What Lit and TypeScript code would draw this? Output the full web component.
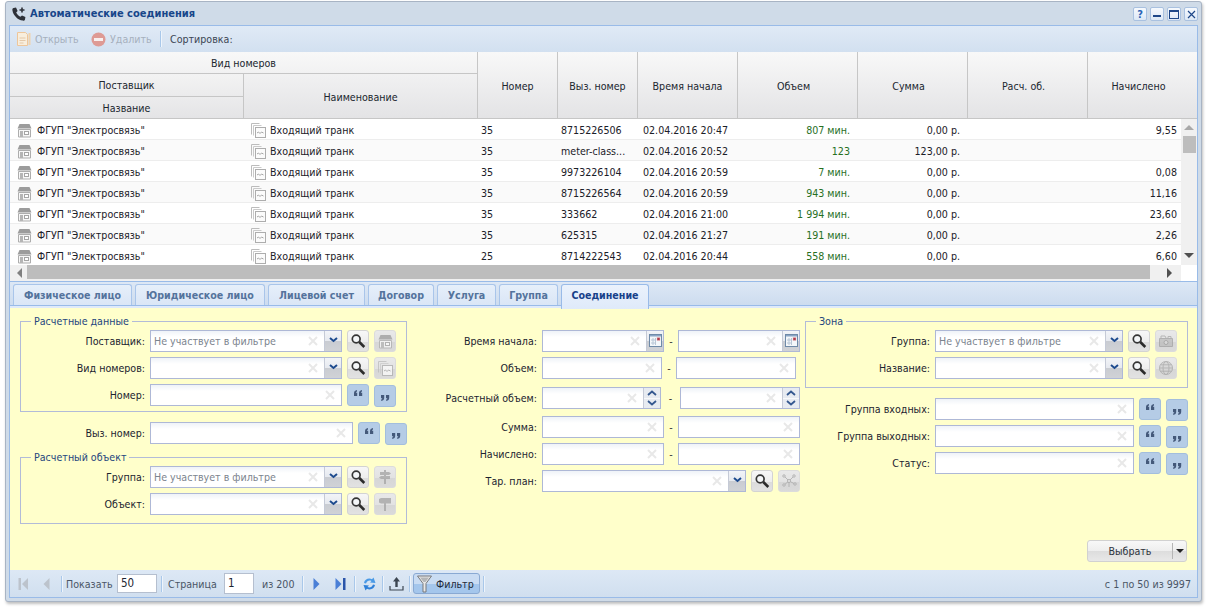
import { LitElement, html, css } from "lit";
import { customElement } from "lit/decorators.js";

const I = {
  phone: html`<svg width="16" height="16" viewBox="0 0 16 16"><path d="M2.600 2 5 1.600 6.600 5 5.200 6.600C6 8.400 7.600 10 9.400 10.800L11 9.400 14.400 11 14 13.400C13.800 14.400 12.800 14.800 11.800 14.600 6.600 13.800 2.200 9.400 1.400 4.200 1.200 3.200 1.600 2.200 2.600 2Z" fill="#2e3138"/><path d="M11 1.500v5M8.500 4h5" stroke="#2e3138" stroke-width="1.600"/></svg>`,
  open: html`<svg width="15" height="16" viewBox="0 0 15 16"><path d="M1.500 1.500h8l2 2v11h-10z" fill="#f8eedd" stroke="#eec69a"/><path d="M3.500 7h6M3.500 9.500h6M3.500 12h4" stroke="#e4c8a8"/><path d="M13.500 2v12" stroke="#f0d3ad" stroke-width="2"/></svg>`,
  del: html`<svg width="15" height="15" viewBox="0 0 15 15"><circle cx="7.500" cy="7.500" r="7" fill="#de9a94"/><rect x="3" y="6" width="9" height="3" fill="#f8efee"/></svg>`,
  shop: html`<svg width="15" height="15" viewBox="0 0 15 15"><path d="M2.500 1h10l2 4.500h-14z" fill="#9c9c9c"/><path d="M1.500 6.500h12v7.500h-12z" fill="#f7f7f7" stroke="#adadad"/><rect x="3" y="8" width="3" height="6" fill="#b5b5b5"/><rect x="7.500" y="8.500" width="4" height="3" fill="#fff" stroke="#a5a5a5"/></svg>`,
  docs: html`<svg width="16" height="16" viewBox="0 0 16 16"><path d="M1.500 12.500v-11h8" fill="none" stroke="#bcbcbc"/><path d="M3.500 13.500v-10h8" fill="none" stroke="#cacaca"/><rect x="5.500" y="5.500" width="10" height="10" fill="#fbfbfb" stroke="#adadad"/><path d="M7 11l1.500-1 1.500 1.500 1.500-1.500 2 1" fill="none" stroke="#a5a5a5"/></svg>`,
  search: html`<svg width="16" height="16" viewBox="0 0 16 16"><circle cx="6.200" cy="6" r="3.900" fill="#f4f6f8" stroke="#353535" stroke-width="1.700"/><path d="M9.300 9l5 5" stroke="#2c2c2c" stroke-width="2.600"/></svg>`,
  qo: html`<svg width="10" height="8" viewBox="0 0 10 8"><path d="M1 7V4.200C1 2.400 2 1.400 4 1v1.500C3.200 2.800 3 3.200 3 3.800h1.200V7zM6 7V4.200C6 2.400 7 1.400 9 1v1.500C8.200 2.800 8 3.200 8 3.800h1.200V7z" fill="#44597a"/></svg>`,
  qc: html`<svg width="10" height="8" viewBox="0 0 10 8"><path d="M4.200 1v2.800C4.200 5.600 3.200 6.600 1.200 7V5.500C2 5.200 2.200 4.800 2.200 4.200H1V1zM9.200 1v2.800C9.200 5.600 8.200 6.600 6.200 7V5.500C7 5.200 7.200 4.800 7.200 4.200H6V1z" fill="#44597a"/></svg>`,
  post2: html`<svg width="16" height="16" viewBox="0 0 16 16"><path d="M7 1h2v14H7z" fill="#a3a3a3"/><path d="M3 3h9l2 1.500-2 1.500H3zM13 7H4L2 8.500 4 10h9z" fill="#a3a3a3"/></svg>`,
  post1: html`<svg width="16" height="16" viewBox="0 0 16 16"><path d="M7 7h2v8H7z" fill="#a3a3a3"/><path d="M2 3l2-1h10v5.500H4l-2-1z" fill="#a3a3a3"/></svg>`,
  folder: html`<svg width="16" height="16" viewBox="0 0 16 16"><path d="M1.500 5.500h13v8h-13z" fill="#bdbdbd" stroke="#a0a0a0"/><path d="M3 5V3h4l1 2M10 5V3.500h3V5" fill="none" stroke="#a8a8a8"/><circle cx="8" cy="9.500" r="2" fill="#d9d9d9" stroke="#999"/></svg>`,
  globe: html`<svg width="16" height="16" viewBox="0 0 16 16"><circle cx="8" cy="8" r="6.500" fill="#d6d6d6" stroke="#a5a5a5"/><ellipse cx="8" cy="8" rx="3" ry="6.500" fill="none" stroke="#a5a5a5"/><path d="M1.500 8h13M2.500 4.800h11M2.500 11.200h11" stroke="#a5a5a5"/></svg>`,
  net: html`<svg width="16" height="16" viewBox="0 0 16 16"><path d="M8 8 3 3M8 8l5-5M8 8l-5 4M8 8l6 3M8 8l0 6" stroke="#a8a8a8"/><g fill="#efefef" stroke="#a0a0a0"><circle cx="8" cy="8" r="1.500"/><circle cx="3" cy="3" r="1.200"/><circle cx="13" cy="3" r="1.200"/><circle cx="3" cy="12" r="1.200"/><circle cx="14" cy="11" r="1.200"/></g></svg>`,
  cal: html`<svg width="13" height="14" viewBox="0 0 13 14"><rect x=".5" y="1.500" width="12" height="12" fill="#f4f7fa" stroke="#6f8aa8"/><rect x="1" y="2" width="11" height="1.500" fill="#8aa5c4"/><path d="M2 7h5M2 10h5M4 5v7M6.500 5v7" stroke="#b8c6d6"/><rect x="8" y="4.500" width="3" height="3" fill="#b03a4a" stroke="#e8c4c8" stroke-width=".5"/></svg>`,
  clear: html`<svg class="x" width="10" height="10" viewBox="0 0 10 10"><path d="M1 1l8 8M9 1l-8 8" stroke="#e8e8e8" stroke-width="2"/></svg>`,
  chev: html`<svg width="9" height="6" viewBox="0 0 9 6"><path d="M1 1l3.500 3L8 1" fill="none" stroke="#1d4a8e" stroke-width="2"/></svg>`,
  up: html`<svg width="10" height="6" viewBox="0 0 10 6"><path d="M1 5l4-3.500L9 5" fill="none" stroke="#34588f" stroke-width="1.800"/></svg>`,
  dn: html`<svg width="10" height="6" viewBox="0 0 10 6"><path d="M1 1l4 3.500L9 1" fill="none" stroke="#34588f" stroke-width="1.800"/></svg>`,
  first: html`<svg width="11" height="12" viewBox="0 0 11 12"><path d="M.5 0h2.500v12H.5z" fill="#bcc3cc"/><path d="M10 0v12L4 6z" fill="#bcc3cc"/></svg>`,
  prev: html`<svg width="7" height="12" viewBox="0 0 7 12"><path d="M6.500 0v12L.5 6z" fill="#bcc3cc"/></svg>`,
  next: html`<svg width="7" height="12" viewBox="0 0 7 12"><path d="M.5 0v12l6-6z" fill="#4a7fd6"/></svg>`,
  last: html`<svg width="11" height="12" viewBox="0 0 11 12"><path d="M.5 0v12l6-6z" fill="#4a7fd6"/><path d="M8 0h2.500v12H8z" fill="#2a55aa"/></svg>`,
  refresh: html`<svg width="15" height="16" viewBox="0 0 15 16"><path d="M2 7C2.500 3.500 6.500 1.500 10 3.200L11.500 1.500 13.500 7 8 6.500 9.500 5C7 3.800 5 5 4 7.500z" fill="#4a9ae6"/><path d="M13 9C12.500 12.500 8.500 14.500 5 12.800L3.500 14.500 1.500 9 7 9.500 5.500 11C8 12.200 10 11 11 8.500z" fill="#2f80d8"/></svg>`,
  upload: html`<svg width="15" height="15" viewBox="0 0 15 15"><path d="M7.500 1 11 5.500H8.700V11H6.300V5.500H4z" fill="#3c4652"/><path d="M1 10v4h13v-4" fill="none" stroke="#3c4652" stroke-width="1.200"/></svg>`,
  filter: html`<svg width="15" height="18" viewBox="0 0 15 18"><path d="M.5 1h14L9 8.500V17H6V8.500z" fill="#e8e8e8" stroke="#77797c"/><path d="M3 2.500h9L8.500 7h-2z" fill="#b4b6b8"/></svg>`,
};

const ROWS = [
  ["35", "8715226506", "20:47", "807 мин.", "0,00 р.", "9,55"],
  ["35", "meter-class...", "20:52", "123", "123,00 р.", ""],
  ["35", "9973226104", "20:59", "7 мин.", "0,00 р.", "0,08"],
  ["35", "8715226564", "20:59", "943 мин.", "0,00 р.", "11,16"],
  ["35", "333662", "21:00", "1 994 мин.", "0,00 р.", "23,60"],
  ["35", "625315", "21:27", "191 мин.", "0,00 р.", "2,26"],
  ["25", "8714222543", "20:44", "558 мин.", "0,00 р.", "6,60"],
];
const TABS: [string, number][] = [["Физическое лицо", 119], ["Юридическое лицо", 130], ["Лицевой счет", 97], ["Договор", 66], ["Услуга", 59], ["Группа", 59]];
const PH = "Не участвует в фильтре";

@customElement("app-root")
export class AppRoot extends LitElement {
  static styles = css`
    :host { display: block; width: 1208px; height: 607px; background: #fff; font: 10.600px "DejaVu Sans Condensed", Tahoma, "Noto Sans", sans-serif; color: #1c2430; overflow: hidden; }
    .win { box-sizing: border-box; width: 1197px; height: 601px; margin: 1px 0 0 5px; border: 1px solid #a8b4c4; border-radius: 3px; background: #cfdbe8; padding: 0 3px 3px 3px; display: flex; flex-direction: column; box-shadow: 1px 2px 3px rgba(0,0,0,.25); }
    .title { height: 23px; display: flex; align-items: center; padding-left: 2px; flex: none; }
    .title > b { color: #17468a; margin-left: 3px; font-size: 11px; }
    .tools { margin-left: auto; display: flex; gap: 3px; margin-top: 1px; }
    .tb { width: 14px; height: 14px; box-sizing: border-box; border: 1px solid #a9c1e0; border-radius: 2px; background: linear-gradient(#f6f9fd, #dce8f6); display: flex; align-items: center; justify-content: center; }
    .tb b { color: #2a63b5; font-size: 11px; }
    .panel { flex: 1; border: 1px solid #99bbe8; display: flex; flex-direction: column; min-height: 0; background: #fff; }
    .top { height: 26px; flex: none; box-sizing: border-box; display: flex; align-items: center; background: linear-gradient(#e0eaf6, #d2e0f0); padding-left: 6px; }
    .dim { display: flex; align-items: center; gap: 4px; color: #a6b0bd; }
    .dim.o { width: 75px; }
    .dim.d { width: 69px; }
    .sep { width: 1px; height: 16px; background: #a9c8ea; box-shadow: 1px 0 0 #eef4fb; flex: none; }
    .sort { margin-left: 9px; color: #3c4654; }
    .grid { height: 229px; flex: none; display: grid; grid-template-columns: 1171px 16px; grid-template-rows: 67px 146px 16px; border-bottom: 1px solid #99bbe8; background: #fff; box-sizing: content-box; }
    .head { grid-column: 1 / 3; display: grid; grid-template-columns: 234px 234px 80px 80px 100px 120px 110px 120px 109px; grid-template-rows: 22px 23px 22px; background: linear-gradient(#f8f8f8, #e3e3e5); }
    .hc { display: flex; align-items: center; justify-content: center; box-sizing: border-box; padding-top: 2px; border-right: 1px solid #c6c6c6; border-bottom: 1px solid #c6c6c6; color: #20262e; }
    .hc.t { grid-column: 1 / 3; padding-top: 0; }
    .hc.r { grid-row: 2 / 4; grid-column: 2; }
    .hc.a { grid-row: 1 / 4; }
    .hc.a.p { padding-right: 8px; }
    .hc.n { border-right: none; }
    .hc.k3 { grid-column: 3; } .hc.k4 { grid-column: 4; } .hc.k5 { grid-column: 5; } .hc.k6 { grid-column: 6; } .hc.k7 { grid-column: 7; } .hc.k8 { grid-column: 8; } .hc.k9 { grid-column: 9; }
    .hc.g1 { grid-column: 1; padding-top: 0; background: linear-gradient(#f3f3f3, #ebebec); }
    .hc.g2 { grid-column: 1; padding-top: 0; background: linear-gradient(#ececed, #e4e4e6); }
    .rows { overflow: hidden; }
    .row { display: grid; grid-template-columns: 234px 234px 80px 80px 100px 120px 110px 120px 93px; height: 21px; box-sizing: border-box; padding-top: 2px; border-bottom: 1px solid #ededed; align-items: center; color: #1b2028; }
    .row.alt { background: #fafafa; }
    .c { display: flex; align-items: center; white-space: nowrap; overflow: hidden; }
    .c.i1 { padding-left: 7px; gap: 5px; }
    .c.i2 { padding-left: 6px; gap: 4px; }
    .c.l { padding-left: 3px; }
    .c.l.m { padding-left: 5px; }
    .c.num { justify-content: flex-end; padding-right: 8px; }
    .c.num.g { color: #27701f; }
    .c.num.e { padding-right: 4px; }
    .vs { background: #f0f0f0; display: flex; flex-direction: column; align-items: center; }
    .tri-u { margin-top: 6px; width: 0; height: 0; border: 5px solid transparent; border-top: 0; border-bottom: 5px solid #a8a8a8; }
    .thumbv { width: 13px; height: 17px; background: #bdbdbd; margin-top: 6px; margin-left: 1px; }
    .tri-d { margin-top: auto; margin-bottom: 7px; width: 0; height: 0; border: 5px solid transparent; border-bottom: 0; border-top: 5px solid #505050; }
    .hs { background: #f0f0f0; display: flex; align-items: flex-start; }
    .tri-l { margin: 3px 5px 0 7px; width: 0; height: 0; border: 5px solid transparent; border-left: 0; border-right: 5px solid #808080; }
    .thumbh { width: 1123px; height: 14px; background: #bdbdbd; }
    .tri-r { margin: 3px 0 0 17px; width: 0; height: 0; border: 5px solid transparent; border-right: 0; border-left: 5px solid #505050; }
    .tabs { height: 23px; flex: none; box-sizing: border-box; padding: 2px 0 0 3px; display: flex; gap: 3px; background: linear-gradient(#dde8f5, #cddcef); align-items: stretch; }
    .tab { box-sizing: border-box; border: 1px solid #a9c5ea; border-bottom: 0; border-radius: 3px 3px 0 0; background: linear-gradient(#e6effa, #dae6f6); font-weight: bold; color: #54739c; display: flex; align-items: center; justify-content: center; }
    .tab.on { width: 88px; color: #17418a; background: linear-gradient(#eaf2fc, #dfeafa); border-color: #99bbe8; margin-bottom: -3px; position: relative; z-index: 1; height: 25px; padding-bottom: 4px; }
    .tabline { height: 1px; background: #99bbe8; flex: none; }
    .tabgap { height: 2px; background: #dfeafa; flex: none; }
    .form { height: 262px; flex: none; box-sizing: border-box; background: #ffffcb; padding: 13px 10px 8px 10px; display: flex; flex-direction: column; }
    .cols { display: flex; flex: 1; }
    .col1 { width: 387px; }
    .col2 { width: 380px; margin-left: 13px; padding-top: 9px; box-sizing: border-box; }
    .col3 { width: 383px; margin-left: 5px; }
    .box { position: relative; border: 1px solid #b2bbd8; padding-top: 8px; padding-bottom: 5px; }
    .box.b8 { padding-bottom: 8px; }
    .box .fr { margin-left: -1px; }
    .leg { position: absolute; top: -7px; left: 10px; padding: 0 3px; background: #ffffcb; color: #25467e; line-height: 13px; }
    .fr { display: flex; align-items: flex-start; height: 22px; }
    .fr + .fr { margin-top: 5px; }
    .mt10 { margin-top: 10px; }
    .mt13 { margin-top: 13px; }
    .fr.mt8 { margin-top: 8px; }
    .fr.mt7 { margin-top: 7px; }
    .fr.mt10 { margin-top: 10px; }
    .lab { text-align: right; box-sizing: border-box; padding-right: 5px; line-height: 22px; flex: none; white-space: nowrap; color: #1c2330; }
    .l122 { width: 122px; }
    .l130 { width: 130px; }
    .inp { box-sizing: border-box; height: 22px; border: 1px solid #aeb8d6; background: linear-gradient(#eff3f8, #fff 6px); display: flex; align-items: center; flex: none; overflow: hidden; }
    .inp .tx { flex: 1; padding-left: 3px; color: #7c848e; white-space: nowrap; overflow: hidden; }
    .x { flex: none; margin-right: 6px; }
    .trg { width: 17px; height: 20px; flex: none; border-left: 1px solid #c5cad6; background: linear-gradient(#f2f4f8 0, #e6e9ef 50%, #c9ccd2 51%, #d0d2d6 100%); display: flex; align-items: center; justify-content: center; padding-bottom: 2px; box-sizing: border-box; }
    .spin { width: 17px; height: 20px; flex: none; border-left: 1px solid #c5cad6; display: flex; flex-direction: column; box-sizing: border-box; background: #e7ebf1; }
    .spin span { flex: 1; display: flex; align-items: center; justify-content: center; }
    .spin span + span { border-top: 1px solid #f8f9fb; }
    .btn { box-sizing: border-box; width: 22px; height: 22px; flex: none; margin-left: 5px; border: 1px solid #d3d3d3; border-radius: 3px; background: linear-gradient(#f7f7f7 0, #ededed 55%, #dcdcdc 56%, #e2e2e2 100%); display: flex; align-items: center; justify-content: center; }
    .btn.off { background: linear-gradient(#e9e9e9 0, #e2e2e2 55%, #d6d6d6 56%, #dadada 100%); border-color: #dcdcdc; }
    .btn.off svg { opacity: .75; }
    .btn.q { background: #b5cce6; border-color: #a3bedd; padding-bottom: 4px; }
    .btn.q.low { margin-top: 1px; padding: 4px 0 0; }
    .dash { flex: none; text-align: center; line-height: 22px; color: #333; }
    .d14 { width: 14px; }
    .d18 { width: 19px; }
    .foot { display: flex; justify-content: flex-end; }
    .sel { width: 100px; height: 22px; box-sizing: border-box; border: 1px solid #d1d1d1; border-radius: 3px; background: linear-gradient(#f8f8f8 0, #eeeeee 50%, #dddddd 52%, #e8e8e8 100%); display: flex; align-items: center; }
    .sel span { width: 84px; text-align: center; color: #2c333d; }
    .sel i { width: 1px; height: 16px; background: #b5b5b5; }
    .sel em { flex: 1; display: flex; justify-content: center; }
    .arr { width: 0; height: 0; border: 4px solid transparent; border-bottom: 0; border-top: 4px solid #222; }
    .bot { height: 27px; flex: none; display: flex; align-items: center; background: linear-gradient(#dde8f5, #d0dfef); color: #4a5666; box-sizing: border-box; padding-left: 8px; }
    .pi { box-sizing: border-box; height: 19px; border: 1px solid #b5bfcf; background: #fff; color: #1c2430; font-size: 11.500px; line-height: 17px; padding-left: 3px; flex: none; }
    .w40 { width: 40px; margin-left: 5px; }
    .w30 { width: 30px; margin-left: 8px; height: 21px; line-height: 19px; }
    .ml { display: flex; align-items: center; }
    .pk { width: 46px; margin-left: 4px; flex: none; white-space: nowrap; }
    .st { width: 48px; margin-left: 6px; flex: none; white-space: nowrap; }
    .iz { width: 33px; margin-left: 8px; flex: none; white-space: nowrap; }
    .m14 { margin-left: 14px; } .m11 { margin-left: 11px; } .m10 { margin-left: 10px; } .m15 { margin-left: 15px; } .m8 { margin-left: 8px; } .m7 { margin-left: 7px; } .m6 { margin-left: 6px; } .m5 { margin-left: 5px; } .m4 { margin-left: 4px; } .m3 { margin-left: 3px; }
    .fb { width: 67px; height: 21px; box-sizing: border-box; margin-left: 3px; border: 1px solid #89a9d3; border-radius: 3px; background: linear-gradient(#c9dcf3 0, #c9dcf3 50%, #a4c6ec 52%, #a4c6ec 100%); display: flex; align-items: center; padding-left: 3px; gap: 4px; color: #1f2a3a; flex: none; }
    .cnt { margin-left: auto; padding-right: 6px; }
  `;

  inp(w: number, ph = "", kind = "") {
    return html`<div class="inp" style="width:${w}px"><span class="tx">${ph}</span>${I.clear}
      ${kind === "c" ? html`<span class="trg">${I.chev}</span>` : ""}
      ${kind === "d" ? html`<span class="trg">${I.cal}</span>` : ""}
      ${kind === "s" ? html`<span class="spin"><span>${I.up}</span><span>${I.dn}</span></span>` : ""}
    </div>`;
  }
  quotes() {
    return html`<span class="btn q">${I.qo}</span><span class="btn q low">${I.qc}</span>`;
  }
  combo(label: string, lc: string, w: number, ph: string, icon: unknown) {
    return html`<div class="fr"><span class="lab ${lc}">${label}</span>${this.inp(w, ph, "c")}<span class="btn">${I.search}</span><span class="btn off">${icon}</span></div>`;
  }
  range(label: string, w1: number, k1: string, dc: string, w2: number) {
    return html`<div class="fr ${label === "Расчетный объем:" ? "mt8" : label === "Сумма:" ? "mt7" : ""}"><span class="lab l122">${label}</span>${this.inp(w1, "", k1)}<span class="dash ${dc}">-</span>${this.inp(w2, "", k1)}</div>`;
  }

  render() {
    return html`<div class="win">
      <div class="title">${I.phone}<b>Автоматические соединения</b>
        <div class="tools">
          <span class="tb"><b>?</b></span>
          <span class="tb"><svg width="8" height="8"><rect x="0" y="5" width="8" height="2" fill="#1e4788"/></svg></span>
          <span class="tb"><svg width="10" height="9"><rect x=".5" y="1" width="9" height="7.500" fill="none" stroke="#1e4788" stroke-width="1"/><rect x="0" y="0" width="10" height="2" fill="#1e4788"/></svg></span>
          <span class="tb"><svg width="9" height="9"><path d="M1 1l7 7M8 1l-7 7" stroke="#1e4788" stroke-width="1.200"/></svg></span>
        </div>
      </div>
      <div class="panel">
        <div class="top">
          <span class="dim o">${I.open}Открыть</span><span class="dim d">${I.del}Удалить</span><span class="sep"></span><span class="sort">Сортировка:</span>
        </div>
        <div class="grid">
          <div class="head">
            <div class="hc t">Вид номеров</div>
            <div class="hc a k3">Номер</div>
            <div class="hc a k4">Выз. номер</div>
            <div class="hc a k5">Время начала</div>
            <div class="hc a p k6">Объем</div>
            <div class="hc a p k7">Сумма</div>
            <div class="hc a p k8">Расч. об.</div>
            <div class="hc a p n k9">Начислено</div>
            <div class="hc g1">Поставщик</div>
            <div class="hc r">Наименование</div>
            <div class="hc g2">Название</div>
          </div>
          <div class="rows">
            ${ROWS.map((r, i) => html`<div class="row ${i % 2 ? "alt" : ""}">
              <div class="c i1">${I.shop}<span>ФГУП "Электросвязь"</span></div>
              <div class="c i2">${I.docs}<span>Входящий транк</span></div>
              <div class="c l">${r[0]}</div>
              <div class="c l">${r[1]}</div>
              <div class="c l m">02.04.2016 ${r[2]}</div>
              <div class="c num g">${r[3]}</div>
              <div class="c num">${r[4]}</div>
              <div class="c num"></div>
              <div class="c num e">${r[5]}</div>
            </div>`)}
          </div>
          <div class="vs"><span class="tri-u"></span><span class="thumbv"></span><span class="tri-d"></span></div>
          <div class="hs"><span class="tri-l"></span><span class="thumbh"></span><span class="tri-r"></span></div>
          <div></div>
        </div>
        <div class="tabs">
          ${TABS.map(([t, w]) => html`<div class="tab" style="width:${w}px">${t}</div>`)}
          <div class="tab on">Соединение</div>
        </div>
        <div class="tabline"></div>
        <div class="tabgap"></div>
        <div class="form">
          <div class="cols">
            <div class="col1">
              <div class="box"><span class="leg">Расчетные данные</span>
                ${this.combo("Поставщик:", "l130", 192, PH, I.shop)}
                ${this.combo("Вид номеров:", "l130", 192, "", I.docs)}
                <div class="fr"><span class="lab l130">Номер:</span>${this.inp(192)}${this.quotes()}</div>
              </div>
              <div class="fr mt10"><span class="lab l130">Выз. номер:</span>${this.inp(203)}${this.quotes()}</div>
              <div class="box b8 mt13"><span class="leg">Расчетный объект</span>
                ${this.combo("Группа:", "l130", 192, PH, I.post2)}
                ${this.combo("Объект:", "l130", 192, "", I.post1)}
              </div>
            </div>
            <div class="col2">
              ${this.range("Время начала:", 122, "d", "d14", 122)}
              ${this.range("Объем:", 120, "", "d14", 120)}
              ${this.range("Расчетный объем:", 119, "s", "d18", 120)}
              ${this.range("Сумма:", 122, "", "d14", 122)}
              ${this.range("Начислено:", 122, "", "d14", 122)}
              <div class="fr"><span class="lab l122">Тар. план:</span>${this.inp(204, "", "c")}<span class="btn">${I.search}</span><span class="btn off">${I.net}</span></div>
            </div>
            <div class="col3">
              <div class="box b8"><span class="leg">Зона</span>
                ${this.combo("Группа:", "l130", 188, PH, I.folder)}
                ${this.combo("Название:", "l130", 188, "", I.globe)}
              </div>
              <div class="fr mt10"><span class="lab l130">Группа входных:</span>${this.inp(199)}${this.quotes()}</div>
              <div class="fr"><span class="lab l130">Группа выходных:</span>${this.inp(199)}${this.quotes()}</div>
              <div class="fr"><span class="lab l130">Статус:</span>${this.inp(199)}${this.quotes()}</div>
            </div>
          </div>
          <div class="foot"><div class="sel"><span>Выбрать</span><i></i><em><b class="arr"></b></em></div></div>
        </div>
        <div class="bot">
          ${I.first}<span class="ml m14">${I.prev}</span><span class="sep m11"></span>
          <span class="pk">Показать</span><span class="pi w40">50</span><span class="sep m4"></span>
          <span class="st">Страница</span><span class="pi w30">1</span><span class="iz">из 200</span><span class="sep m7"></span>
          <span class="ml m10">${I.next}</span><span class="ml m15">${I.last}</span><span class="sep m8"></span>
          <span class="ml m7">${I.refresh}</span><span class="sep m5"></span>
          <span class="ml m6">${I.upload}</span><span class="sep m5"></span>
          <div class="fb">${I.filter}<span>Фильтр</span></div><span class="sep m3"></span>
          <span class="cnt">с 1 по 50 из 9997</span>
        </div>
      </div>
    </div>`;
  }
}
